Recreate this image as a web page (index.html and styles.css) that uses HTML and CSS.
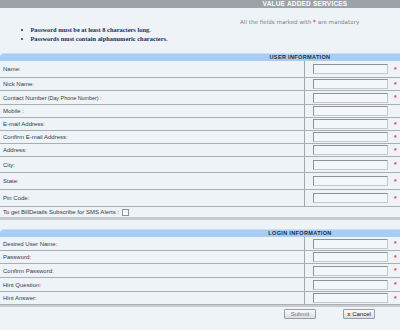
FILE: index.html
```html
<!DOCTYPE html>
<html lang="en">
<head>
    <meta charset="UTF-8">
    <title>Value Added Services</title>
    <link rel="stylesheet" href="styles.css">
</head>
<body>
    <div class="topbar"><span>VALUE ADDED SERVICES</span></div>
    <p class="note">All the fields marked with <span class="req">*</span> are mandatory</p>
    <ul class="rules">
        <li>Password must be at least 8 characters long.</li>
        <li>Passwords must contain alphanumeric characters.</li>
    </ul>

    <div class="block">
        <div class="bar"><span>USER INFORMATION</span></div>
        <div class="row row-xl"><label>Name:</label><div class="field"><input type="text"><span class="req">*</span></div></div>
        <div class="row"><label>Nick Name:</label><div class="field"><input type="text"><span class="req">*</span></div></div>
        <div class="row row-md"><label>Contact Number <small>(Day Phone Number)</small>:</label><div class="field"><input type="text"><span class="req">*</span></div></div>
        <div class="row"><label>Mobile :</label><div class="field"><input type="text"></div></div>
        <div class="row"><label>E-mail Address:</label><div class="field"><input type="text"><span class="req">*</span></div></div>
        <div class="row"><label>Confirm E-mail Address:</label><div class="field"><input type="text"><span class="req">*</span></div></div>
        <div class="row"><label>Address:</label><div class="field"><input type="text"><span class="req">*</span></div></div>
        <div class="row row-lg"><label>City:</label><div class="field"><input type="text"><span class="req">*</span></div></div>
        <div class="row row-xl"><label>State:</label><div class="field"><input type="text"><span class="req">*</span></div></div>
        <div class="row row-xl"><label>Pin Code:</label><div class="field"><input type="text"><span class="req">*</span></div></div>
        <div class="row row-full"><label>To get BillDetails Subscribe for SMS Alerts : <input type="checkbox" class="check"></label></div>
    </div>

    <div class="block block-login">
        <div class="bar"><span>LOGIN INFORMATION</span></div>
        <div class="row row-md"><label>Desired User Name:</label><div class="field"><input type="text"><span class="req">*</span></div></div>
        <div class="row"><label>Password:</label><div class="field"><input type="password"><span class="req">*</span></div></div>
        <div class="row row-md"><label>Confirm Password:</label><div class="field"><input type="password"><span class="req">*</span></div></div>
        <div class="row row-md"><label>Hint Question:</label><div class="field"><input type="text"><span class="req">*</span></div></div>
        <div class="row"><label>Hint Answer:</label><div class="field"><input type="text"><span class="req">*</span></div></div>
    </div>

    <div class="actions">
        <button class="btn">Submit</button>
        <button class="btn btn-cancel"><span class="x">x</span> Cancel</button>
    </div>
</body>
</html>
```
FILE: styles.css
```css
body {
    margin: 0;
    background: #eef3f7;
    font-family: "Liberation Sans", Arial, sans-serif;
    font-size: 6px;
    color: #353b44;
}
.topbar {
    height: 8px;
    background: #9da1a8;
    color: #fff;
    font-weight: bold;
    font-size: 6.5px;
    line-height: 8px;
    padding-left: 210px;
    text-align: center;
    letter-spacing: 0.2px;
}
.note {
    margin: 0;
    padding: 11px 0 0 240px;
    height: 6px;
    line-height: 6px;
    color: #7a8088;
    font-family: "DejaVu Sans", Verdana, sans-serif;
    font-size: 5.6px;
}
.req {
    color: #e8403c;
    font-weight: bold;
}
.rules {
    margin: 0;
    padding: 0 0 0 21px;
    height: 28px;
    list-style-position: inside;
    font-family: "Liberation Serif", "Times New Roman", serif;
    font-size: 6.4px;
    font-weight: bold;
    color: #262a5a;
    line-height: 9px;
}
.block {
    border-bottom: 3px solid #c8ccd1;
}
.bar {
    height: 7px;
    background: #a8cdf4;
    border-top: 1px solid #c6def7;
    border-top-left-radius: 4px;
    color: #23303e;
    font-weight: bold;
    font-size: 5.6px;
    line-height: 7px;
    padding-left: 200px;
    text-align: center;
    letter-spacing: 0.3px;
}
.row {
    display: grid;
    grid-template-columns: 305px 1fr;
    height: 13px;
    border-bottom: 1px solid #abafb4;
    box-sizing: border-box;
}
.row-md { height: 14px; }
.row-lg { height: 16px; }
.row-xl { height: 17px; }
.row label {
    display: flex;
    align-items: center;
    padding-left: 3px;
    border-right: 1px solid #a3a7ac;
    white-space: nowrap;
}
.row label small {
    font-size: 5.4px;
    margin: 0 1px;
}
.row-full {
    display: block;
    height: 10px;
    border-bottom: none;
}
.row-full label {
    border-right: none;
    height: 10px;
}
.check {
    appearance: none;
    width: 7px;
    height: 7px;
    margin: 0 0 0 3px;
    border: 1px solid #8e9296;
    background: #f6f8fa;
    border-radius: 0;
}
.field {
    display: flex;
    align-items: center;
    padding-left: 8px;
}
.field input {
    width: 75px;
    height: 10px;
    box-sizing: border-box;
    margin: 0;
    padding: 0;
    border: 1px solid #8e9296;
    border-right-color: #c4c8cc;
    border-bottom-color: #c4c8cc;
    background: #f3f7fb;
}
.field .req {
    margin-left: 6px;
    font-size: 7px;
}
.block-login {
    margin-top: 9px;
    border-bottom-width: 2px;
}
.actions {
    display: flex;
    padding: 2px 0 0 284px;
    gap: 27px;
}
.btn {
    width: 32px;
    height: 10px;
    padding: 0;
    font-family: "Liberation Sans", Arial, sans-serif;
    font-size: 6px;
    line-height: 8px;
    color: #6a7078;
    background: linear-gradient(#fafbfc, #d9dde2);
    border: 1px solid #9a9ea4;
    border-radius: 1px;
}
.btn-cancel {
    color: #222;
}
.btn-cancel .x {
    color: #d42020;
    font-weight: bold;
}
```
